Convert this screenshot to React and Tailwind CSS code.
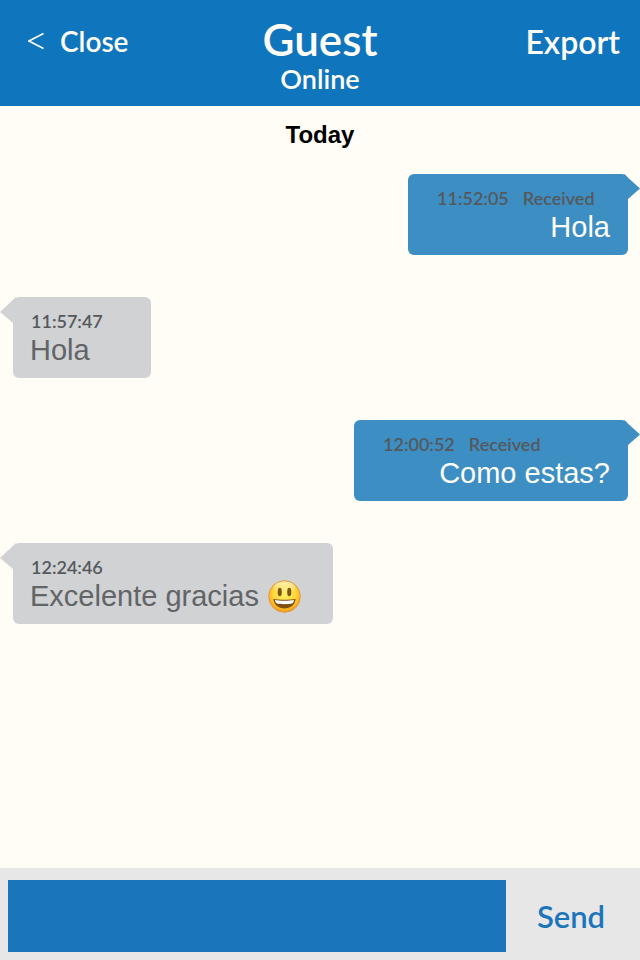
// Chat conversation screen: header bar, message bubbles and a composer.
const MESSAGES = [
  { id: 1, mine: true, time: '11:52:05', status: 'Received', text: 'Hola', width: 'w-[220px]' },
  { id: 2, mine: false, time: '11:57:47', text: 'Hola', width: 'w-[138px]' },
  { id: 3, mine: true, time: '12:00:52', status: 'Received', text: 'Como estas?', width: 'w-[274px]' },
  { id: 4, mine: false, time: '12:24:46', text: 'Excelente gracias', smiley: true, width: 'w-[320px]' },
];

function Smiley() {
  return (
    <svg viewBox="0 0 32 32" className="h-[33px] w-[33px] flex-none" role="img" aria-label="Smiley">
      <defs>
        <radialGradient id="face" cx="0.5" cy="0.42" r="0.58">
          <stop offset="0" stopColor="#ffee68" />
          <stop offset="0.6" stopColor="#ffd83c" />
          <stop offset="0.85" stopColor="#fdb524" />
          <stop offset="1" stopColor="#ec9420" />
        </radialGradient>
        <linearGradient id="shine" x1="0" y1="0" x2="0" y2="1">
          <stop offset="0" stopColor="#fff" stopOpacity="0.6" />
          <stop offset="1" stopColor="#fff" stopOpacity="0" />
        </linearGradient>
      </defs>
      <circle cx="16" cy="16" r="15.3" fill="url(#face)" stroke="#e5963c" strokeWidth="0.9" />
      <ellipse cx="16" cy="7.5" rx="10.5" ry="6" fill="url(#shine)" />
      <ellipse cx="11.4" cy="11.6" rx="2" ry="4.2" fill="#7d5410" />
      <ellipse cx="20.6" cy="11.6" rx="2" ry="4.2" fill="#7d5410" />
      <path d="M5.2 18.4c4 1 17.6 1 21.6 0c-.6 5.6-5 9.2-10.8 9.2s-10.2-3.600-10.800-9.200z" fill="#80500f" />
      <path d="M6.8 19.5c4 .9 14.4 .9 18.4 0c-.3 2.2-1 3-2 3.300c-3.400 .8-11 .8-14.400 0c-1-.3-1.700-1.100-2-3.300z" fill="#fff" />
    </svg>
  );
}

function Tail({ mine }) {
  return (
    <svg
      viewBox="0 0 16 30"
      aria-hidden="true"
      className={
        mine
          ? 'absolute top-0 -right-3 h-[30px] w-4 text-[#3d8fc3]'
          : 'absolute top-0 -left-[13px] h-[30px] w-4 text-[#d0d2d4]'
      }
    >
      <path d={mine ? 'M0 0L16 14.500L4 25V30H0z' : 'M16 0L0 15L13 26V30H16z'} fill="currentColor" />
    </svg>
  );
}

function Bubble({ message }) {
  const { mine, time, status, text, smiley, width } = message;
  return (
    <li
      className={`relative flex flex-col rounded-md pt-3 pb-[11px] ${width} ${
        mine ? 'mr-3 self-end bg-[#3d8fc3]' : 'ml-[13px] self-start bg-[#d0d2d4]'
      }`}
    >
      <Tail mine={mine} />
      <p
        className={`flex gap-[14px] font-['Lato',sans-serif] text-[18px] leading-6 font-semibold text-[#55585c] ${
          mine ? 'pl-[29px]' : 'pl-[18px]'
        }`}
      >
        <time>{time}</time>
        {status && <span>{status}</span>}
      </p>
      <p
        className={`flex items-center gap-[9px] text-[29px] leading-[34px] whitespace-nowrap ${
          mine ? 'justify-end pr-[18px] text-[#fffdf7]' : 'pl-[17px] text-[#626466]'
        }`}
      >
        {text}
        {smiley && <Smiley />}
      </p>
    </li>
  );
}

export default function App() {
  return (
    <div className="flex min-h-screen flex-col bg-[#fffdf6] font-['Liberation_Sans',Arial,sans-serif]">
      <header className="grid h-[106px] grid-cols-3 items-start bg-[#0f76bd] px-5 font-['Lato',sans-serif] font-semibold text-[#fffdf6]">
        <button type="button" className="mt-5 ml-2 flex items-center gap-4 justify-self-start text-[28px] leading-[42px]">
          <svg viewBox="0 0 16 18" fill="none" stroke="currentColor" strokeWidth="1.6" className="h-[18px] w-4" aria-hidden="true">
            <path d="M15.5 1.500L1 9l14.500 7.500" />
          </svg>
          Close
        </button>
        <div className="mt-[15px] text-center">
          <h1 className="text-[44px] leading-12 font-semibold">Guest</h1>
          <p className="text-[27px] leading-8">Online</p>
        </div>
        <button type="button" className="mt-5 justify-self-end text-[32px] leading-11">
          Export
        </button>
      </header>

      <main className="flex-1">
        <h2 className="pt-[13px] text-center text-2xl font-bold text-black">Today</h2>
        <ul className="mt-[23px] flex flex-col gap-[42px]">
          {MESSAGES.map((message) => (
            <Bubble key={message.id} message={message} />
          ))}
        </ul>
      </main>

      <form className="flex h-[92px] items-center bg-[#e7e7e8] pt-1 pl-2" onSubmit={(e) => e.preventDefault()}>
        <input
          type="text"
          aria-label="Message"
          className="h-[72px] min-w-0 flex-1 bg-[#1b75bb] px-3 text-[28px] text-[#fffdf6] outline-none"
        />
        <button type="submit" className="w-[134px] pr-1 font-['Lato',sans-serif] text-[31px] font-semibold text-[#1b75bb]">
          Send
        </button>
      </form>
    </div>
  );
}
